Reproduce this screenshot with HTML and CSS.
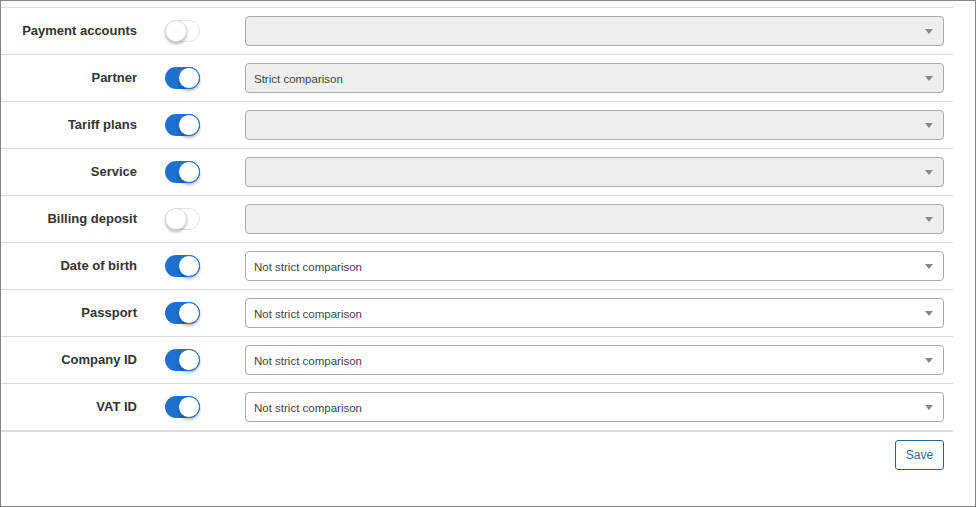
FILE: index.html
```html
<!DOCTYPE html>
<html>
<head>
<meta charset="utf-8">
<link rel="stylesheet" href="styles.css">
</head>
<body>
<div class="frame">
  <div class="form">
    <div class="row">
      <div class="label">Payment accounts</div>
      <div class="toggle off"><span class="knob"></span></div>
      <div class="select disabled"><span class="value"></span><span class="caret"></span></div>
    </div>
    <div class="row">
      <div class="label">Partner</div>
      <div class="toggle on"><span class="knob"></span></div>
      <div class="select disabled"><span class="value">Strict comparison</span><span class="caret"></span></div>
    </div>
    <div class="row">
      <div class="label">Tariff plans</div>
      <div class="toggle on"><span class="knob"></span></div>
      <div class="select disabled"><span class="value"></span><span class="caret"></span></div>
    </div>
    <div class="row">
      <div class="label">Service</div>
      <div class="toggle on"><span class="knob"></span></div>
      <div class="select disabled"><span class="value"></span><span class="caret"></span></div>
    </div>
    <div class="row">
      <div class="label">Billing deposit</div>
      <div class="toggle off"><span class="knob"></span></div>
      <div class="select disabled"><span class="value"></span><span class="caret"></span></div>
    </div>
    <div class="row">
      <div class="label">Date of birth</div>
      <div class="toggle on"><span class="knob"></span></div>
      <div class="select"><span class="value">Not strict comparison</span><span class="caret"></span></div>
    </div>
    <div class="row">
      <div class="label">Passport</div>
      <div class="toggle on"><span class="knob"></span></div>
      <div class="select"><span class="value">Not strict comparison</span><span class="caret"></span></div>
    </div>
    <div class="row">
      <div class="label">Company ID</div>
      <div class="toggle on"><span class="knob"></span></div>
      <div class="select"><span class="value">Not strict comparison</span><span class="caret"></span></div>
    </div>
    <div class="row last">
      <div class="label">VAT ID</div>
      <div class="toggle on"><span class="knob"></span></div>
      <div class="select"><span class="value">Not strict comparison</span><span class="caret"></span></div>
    </div>
    <div class="footer">
      <button class="btn">Save</button>
    </div>
  </div>
</div>
</body>
</html>
```

FILE: styles.css
```css
* { box-sizing: border-box; }
html, body { margin: 0; padding: 0; background: #fff; }
body { font-family: "Liberation Sans", Arial, sans-serif; color: #333; }

.frame {
  width: 976px;
  height: 507px;
  border: 1px solid #858585;
  padding: 6px 22px 0 0;
}

.form { width: 952px; }

.row {
  display: flex;
  align-items: center;
  height: 47px;
  border-top: 1px solid #dcdcdc;
  padding: 8px 9px 8px 0;
}
.row.last {
  border-bottom: 2px solid #dcdcdc;
  height: 49px;
}

.label {
  width: 136px;
  text-align: right;
  font-weight: bold;
  font-size: 13px;
  color: #333;
  line-height: 16px;
}

.toggle {
  position: relative;
  width: 35px;
  height: 22px;
  border-radius: 11px;
  margin-left: 28px;
  margin-right: 45px;
  flex: none;
}
.toggle.on { background: #1d72cf; }
.toggle.off { background: #fff; border: 1px solid #e4e4e4; }
.knob {
  position: absolute;
  top: 0;
  width: 22px;
  height: 22px;
  border-radius: 50%;
  background: #fff;
  box-shadow: 0 2px 3px rgba(0,0,0,0.28);
}
.toggle.on .knob { right: 0; border: 1px solid #1d72cf; }
.toggle.off .knob { left: -1px; top: -1px; border: 1px solid #ddd; }

.select {
  flex: 1;
  height: 30px;
  border: 1px solid #aaa;
  border-radius: 4px;
  background: #fff;
  display: flex;
  align-items: center;
  padding: 2px 10px 0 8px;
  font-size: 11.5px;
  color: #444;
}
.select.disabled { background: #eee; }
.select .value { flex: 1; }
.caret {
  width: 0;
  height: 0;
  margin-bottom: 1px;
  border-left: 4px solid transparent;
  border-right: 4px solid transparent;
  border-top: 5px solid #888;
}

.footer {
  display: flex;
  justify-content: flex-end;
  padding: 8px 9px 0 0;
}
.btn {
  width: 49px;
  height: 30px;
  border: 1px solid #2a5f94;
  border-radius: 3px;
  background: #fff;
  color: #2a6aa8;
  font-family: "Liberation Sans", Arial, sans-serif;
  font-size: 12px;
  padding: 0;
}
```
